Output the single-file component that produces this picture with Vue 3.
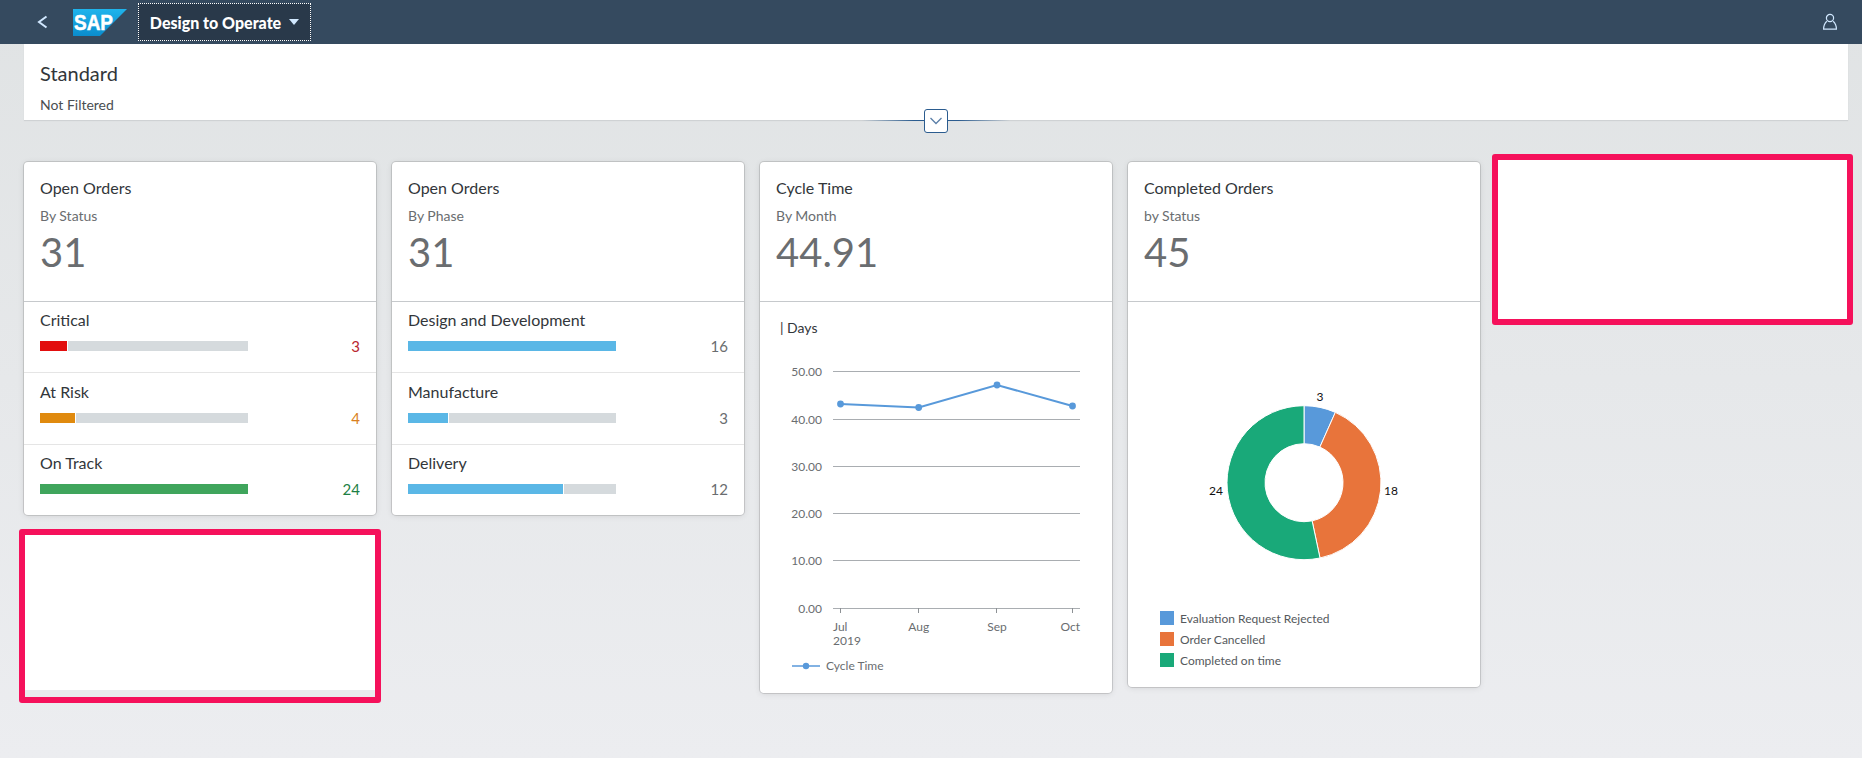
<script setup>
const statusRows = [
  { label: 'Critical', value: 3, fill: 13, color: '#e20e0e', text: '#b9262f' },
  { label: 'At Risk', value: 4, fill: 17, color: '#e08a0e', text: '#d97f20' },
  { label: 'On Track', value: 24, fill: 100, color: '#3fa55c', text: '#1d7f45' },
]
const phaseRows = [
  { label: 'Design and Development', value: 16, fill: 100, color: '#5ab7e6', text: '#6a6d70' },
  { label: 'Manufacture', value: 3, fill: 19, color: '#5ab7e6', text: '#6a6d70' },
  { label: 'Delivery', value: 12, fill: 74.5, color: '#5ab7e6', text: '#6a6d70' },
]
const barCards = [
  { title: 'Open Orders', sub: 'By Status', kpi: '31', rows: statusRows },
  { title: 'Open Orders', sub: 'By Phase', kpi: '31', rows: phaseRows },
]
const grid = [
  { y: 371.5, label: '50.00' },
  { y: 419.5, label: '40.00' },
  { y: 466.5, label: '30.00' },
  { y: 513.5, label: '20.00' },
  { y: 560.5, label: '10.00' },
  { y: 608.5, label: '0.00' },
]
const points = [
  { x: 840.5, y: 404, tick: 840.5, label: 'Jul', anchor: 'start', lx: 833 },
  { x: 918.7, y: 407.5, tick: 918.5, label: 'Aug', anchor: 'middle', lx: 918.7 },
  { x: 997, y: 385, tick: 996.5, label: 'Sep', anchor: 'middle', lx: 997 },
  { x: 1072.5, y: 406, tick: 1072.5, label: 'Oct', anchor: 'end', lx: 1080 },
]
const polyline = points.map((p) => `${p.x},${p.y}`).join(' ')

const cx = 1304
const cy = 482.7
const ro = 77
const ri = 39
function arc(a0, a1) {
  const rad = (a) => ((a - 90) * Math.PI) / 180
  const pt = (r, a) => `${(cx + r * Math.cos(rad(a))).toFixed(2)} ${(cy + r * Math.sin(rad(a))).toFixed(2)}`
  const large = a1 - a0 > 180 ? 1 : 0
  return `M${pt(ro, a0)} A${ro} ${ro} 0 ${large} 1 ${pt(ro, a1)} L${pt(ri, a1)} A${ri} ${ri} 0 ${large} 0 ${pt(ri, a0)} Z`
}
const slices = [
  { d: arc(0, 24), color: '#5899da' },
  { d: arc(24, 168), color: '#e8743b' },
  { d: arc(168, 360), color: '#19a979' },
]
const legend = [
  { label: 'Evaluation Request Rejected', color: '#5899da' },
  { label: 'Order Cancelled', color: '#e8743b' },
  { label: 'Completed on time', color: '#19a979' },
]
</script>

<template>
  <div class="page">
    <header class="shell">
      <svg class="back" width="12" height="16" viewBox="0 0 12 16" aria-hidden="true">
        <path d="M10.5 2.5 L3 8 L10.5 13.5" fill="none" stroke="#d1e8ff" stroke-width="2" />
      </svg>
      <svg class="logo" width="54" height="27" viewBox="0 0 54 27" role="img" aria-label="SAP">
        <defs>
          <linearGradient id="sapBlue" x1="0" y1="0" x2="0" y2="1">
            <stop offset="0" stop-color="#1fb4ec" />
            <stop offset="1" stop-color="#0a8ccd" />
          </linearGradient>
        </defs>
        <polygon points="0,0 54,0 27,27 0,27" fill="url(#sapBlue)" />
        <text x="1" y="20.5" class="logo-text" textLength="39" lengthAdjust="spacingAndGlyphs">SAP</text>
      </svg>
      <button class="app-title">
        <span>Design to Operate</span>
        <svg width="10" height="6" viewBox="0 0 10 6" aria-hidden="true"><polygon points="0,0 10,0 5,6" fill="#d1e8ff" /></svg>
      </button>
      <svg class="user" width="16" height="18" viewBox="0 0 16 18" aria-hidden="true">
        <circle cx="8" cy="5" r="3.6" fill="none" stroke="#d1e8ff" stroke-width="1.2" />
        <path d="M4.8 8.2 C2.8 10 1.6 12.5 1.6 16.2 H14.4 C14.4 12.5 13.2 10 11.2 8.2" fill="none" stroke="#d1e8ff" stroke-width="1.2" />
      </svg>
    </header>

    <section class="filter">
      <div class="filter-title">Standard</div>
      <div class="filter-sub">Not Filtered</div>
      <div class="collapse-line"></div>
      <button class="collapse" aria-label="Expand">
        <svg width="14" height="8" viewBox="0 0 14 8" aria-hidden="true"><path d="M1.5 1 L7 6.5 L12.5 1" fill="none" stroke="#5b7fa8" stroke-width="1.3" /></svg>
      </button>
    </section>

    <main class="board">
      <div v-for="(c, ci) in barCards" :key="ci" class="column">
        <article class="card">
          <div class="card-head">
            <div class="card-title">{{ c.title }}</div>
            <div class="card-sub">{{ c.sub }}</div>
            <div class="card-kpi">{{ c.kpi }}</div>
          </div>
          <div v-for="r in c.rows" :key="r.label" class="row">
            <div class="row-label">{{ r.label }}</div>
            <div class="row-line">
              <div class="track">
                <div class="fill" :style="{ width: r.fill + '%', background: r.color }"></div>
              </div>
              <div class="row-value" :style="{ color: r.text }">{{ r.value }}</div>
            </div>
          </div>
        </article>
        <div v-if="ci === 0" class="masked masked-low"><div class="masked-white"></div></div>
      </div>

      <div class="column">
        <article class="card">
          <div class="card-head">
            <div class="card-title">Cycle Time</div>
            <div class="card-sub">By Month</div>
            <div class="card-kpi">44.91</div>
          </div>
          <div class="chart-title">| Days</div>
          <svg class="plot" width="352" height="306" viewBox="760 350 352 306">
            <g v-for="g in grid" :key="g.label">
              <line x1="833" x2="1080" :y1="g.y" :y2="g.y" stroke="#a9adb1" stroke-width="1" />
              <text x="822" :y="g.y + 4" text-anchor="end" class="axis">{{ g.label }}</text>
            </g>
            <g v-for="p in points" :key="p.label">
              <line :x1="p.tick" :x2="p.tick" y1="608" y2="613" stroke="#8d9195" />
              <text :x="p.lx" y="631" :text-anchor="p.anchor" class="axis">{{ p.label }}</text>
            </g>
            <text x="833" y="645" class="axis">2019</text>
            <polyline :points="polyline" fill="none" stroke="#5899da" stroke-width="2" />
            <circle v-for="p in points" :key="p.label + 'dot'" :cx="p.x" :cy="p.y" r="3.4" fill="#5899da" />
          </svg>
          <div class="line-legend">
            <svg width="28" height="8" viewBox="0 0 28 8" aria-hidden="true">
              <line x1="0" x2="28" y1="4" y2="4" stroke="#5899da" stroke-width="1.6" />
              <circle cx="14" cy="4" r="3.2" fill="#5899da" />
            </svg>
            <span>Cycle Time</span>
          </div>
        </article>
      </div>

      <div class="column">
        <article class="card">
          <div class="card-head">
            <div class="card-title">Completed Orders</div>
            <div class="card-sub">by Status</div>
            <div class="card-kpi">45</div>
          </div>
          <svg class="plot" width="352" height="300" viewBox="1128 302 352 300">
            <path v-for="s in slices" :key="s.color" :d="s.d" :fill="s.color" stroke="#fff" stroke-width="1" />
            <text x="1320" y="401" text-anchor="middle" class="donut-label">3</text>
            <text x="1391" y="495" text-anchor="middle" class="donut-label">18</text>
            <text x="1216" y="495" text-anchor="middle" class="donut-label">24</text>
          </svg>
          <ul class="legend">
            <li v-for="l in legend" :key="l.label">
              <i :style="{ background: l.color }"></i>
              <span>{{ l.label }}</span>
            </li>
          </ul>
        </article>
      </div>

      <div class="column">
        <div class="masked masked-top"></div>
      </div>
    </main>
  </div>
</template>

<style>
html, body { margin: 0; }
</style>

<style scoped>
.page {
  width: 1862px;
  height: 758px;
  overflow: hidden;
  background: linear-gradient(#e0e3e4, #ecedf0);
  font-family: Lato, "Open Sans", sans-serif;
  color: #32363a;
}
.shell {
  height: 44px;
  background: #354a5f;
  display: flex;
  align-items: center;
}
.back { margin-left: 36px; }
.logo { margin-left: 25px; }
.logo-text {
  font-family: "Liberation Sans", sans-serif;
  font-weight: 700;
  font-size: 22px;
  fill: #fff;
  stroke: #fff;
  stroke-width: 0.5px;
}
.app-title {
  margin-left: 11px;
  width: 173px;
  height: 38px;
  box-sizing: border-box;
  border: 1px dotted #fff;
  background: #29394a;
  color: #fff;
  font: 900 16px Lato, sans-serif;
  display: flex;
  align-items: center;
  justify-content: center;
  gap: 8px;
  padding: 0;
}
.user { margin-left: auto; margin-right: 24px; }

.filter {
  position: relative;
  margin: 0 14px 0 24px;
  height: 76px;
  box-sizing: border-box;
  padding: 17px 0 0 16px;
  background: #fff;
  box-shadow: 0 1px 1px #cfd2d4;
}
.filter-title { font-size: 20px; line-height: 24px; color: #32363a; }
.filter-sub { font-size: 14px; line-height: 18px; margin-top: 11px; color: #4a4e52; }
.collapse-line {
  position: absolute;
  left: 838px;
  width: 148px;
  top: 76px;
  height: 1px;
  background: linear-gradient(90deg, transparent, #2b5c8f 35%, #2b5c8f 65%, transparent);
}
.collapse {
  position: absolute;
  left: 900px;
  top: 65px;
  width: 24px;
  height: 24px;
  box-sizing: border-box;
  padding: 0;
  border: 1px solid #2b5c8f;
  border-radius: 3px;
  background: #fff;
  display: flex;
  align-items: center;
  justify-content: center;
}

.board {
  display: flex;
  gap: 16px;
  padding: 42px 0 0 24px;
  align-items: flex-start;
}
.column { width: 352px; }
.card {
  width: 352px;
  box-sizing: border-box;
  border-radius: 4px;
  background: #fff;
  box-shadow: 0 0 0 1px rgba(0, 0, 0, 0.12), 0 1px 6px rgba(0, 0, 0, 0.1);
  overflow: hidden;
}
.card-head {
  height: 140px;
  box-sizing: border-box;
  padding: 16px 16px 0;
  border-bottom: 1px solid #c6c9cc;
}
.card-title { font-size: 16px; line-height: 20px; color: #32363a; }
.card-sub { font-size: 14px; line-height: 18px; margin-top: 9px; color: #6a6d70; }
.card-kpi { font-size: 40px; line-height: 44px; margin-top: 5px; color: #6a6d70; }

.row {
  height: 71px;
  box-sizing: border-box;
  padding: 8px 16px 0;
  border-bottom: 1px solid #e5e5e5;
}
.row:nth-of-type(3) { height: 72px; padding-top: 9px; }
.row:last-child { border-bottom: 0; height: 70px; }
.row-label { font-size: 16px; line-height: 20px; color: #32363a; }
.row-line {
  margin-top: 11px;
  height: 10px;
  display: flex;
  align-items: center;
  justify-content: space-between;
}
.track { width: 208px; height: 10px; background: #d5dadd; }
.fill { height: 10px; box-shadow: 1px 0 0 #fff; }
.row-value { font-size: 15px; line-height: 20px; }

.chart-title {
  font-size: 14px;
  line-height: 20px;
  padding: 16px 0 12px 20px;
  color: #32363a;
}
.plot { display: block; }
.axis {
  font-family: Lato, sans-serif;
  font-size: 12px;
  fill: #6a6d70;
}
.line-legend {
  height: 37px;
  box-sizing: border-box;
  padding-left: 32px;
  display: flex;
  align-items: flex-start;
  gap: 6px;
  font-size: 12px;
  line-height: 20px;
  color: #6a6d70;
}
.line-legend svg { margin-top: 6px; }
.donut-label {
  font-family: Lato, sans-serif;
  font-size: 12px;
  fill: #111;
}
.legend {
  list-style: none;
  margin: 0;
  padding: 9px 0 20px 32px;
  display: flex;
  flex-direction: column;
  gap: 7px;
}
.legend li {
  display: flex;
  align-items: center;
  gap: 6px;
  height: 14px;
  font-size: 12px;
  color: #55595d;
}
.legend i { width: 14px; height: 14px; display: block; }

.masked {
  border: 6px solid #f5115b;
  border-radius: 3px;
  box-sizing: border-box;
}
.masked-low {
  width: 362px;
  height: 174px;
  margin: 14px 0 0 -5px;
  background: #e9ebed;
}
.masked-white { height: 155px; background: #fff; }
.masked-top {
  width: 361px;
  height: 171px;
  margin: -8px 0 0 -4px;
  background: #fff;
}
</style>
